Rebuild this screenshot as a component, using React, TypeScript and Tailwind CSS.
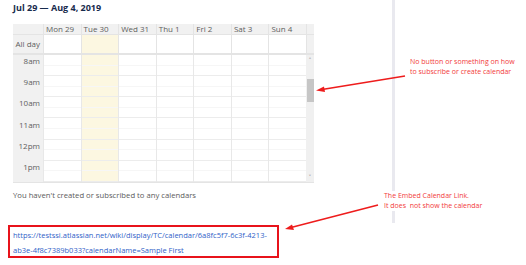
import React from 'react';

const days = ['Mon 29', 'Tue 30', 'Wed 31', 'Thu 1', 'Fri 2', 'Sat 3', 'Sun 4'];
const hours = ['8am', '9am', '10am', '11am', '12pm', '1pm'];

const font = { fontFamily: '"Open Sans", "Noto Sans", sans-serif' };

const Arrows = () => (
  <svg className="absolute inset-0 pointer-events-none" width="526" height="265" viewBox="0 0 526 265">
    <line x1="405" y1="76" x2="322" y2="89.5" stroke="#ee1c1c" strokeWidth="1.6" />
    <polygon points="316,90.5 324,86.5 325,92" fill="#ee1c1c" />
    <line x1="378" y1="205" x2="291" y2="227.5" stroke="#ee1c1c" strokeWidth="1.6" />
    <polygon points="285,229 292,224.5 294,230" fill="#ee1c1c" />
  </svg>
);

const App = () => {
  return (
    <div className="relative w-[526px] h-[265px] bg-white overflow-hidden" style={font}>
      <div className="flex">
        <div className="w-[395px] h-[223px] border-r-[3px] border-[#e9e9ef] pl-[13px] pt-[2px]">
          <h2 className="text-[9px] font-bold text-[#172b4d] leading-[12px] h-[22px]">Jul 29 — Aug 4, 2019</h2>

          <div className="w-[301px] text-[8px] text-[#5e5e5e]">
            {/* header */}
            <div className="flex h-[10px] bg-[#f1f1f1] leading-[10px]">
              <div className="w-[30px]" />
              {days.map(d => (
                <div key={d} className="flex-1 pl-[2px] border-l border-[#e4e4e4] whitespace-nowrap overflow-hidden">{d}</div>
              ))}
              <div className="w-[8px] border-l border-[#e4e4e4]" />
            </div>

            {/* all day */}
            <div className="flex h-[19px] border-t border-[#e4e4e4]">
              <div className="w-[30px] bg-[#f1f1f1] flex items-center justify-end pr-[3px] whitespace-nowrap">All day</div>
              {days.map((d, i) => (
                <div key={d} className={`flex-1 border-l border-[#e4e4e4] ${i === 1 ? 'bg-[#fcf7e1]' : 'bg-white'}`} />
              ))}
              <div className="w-[8px] border-l border-[#e4e4e4] bg-[#f1f1f1]" />
            </div>

            <div className="h-[2px] bg-[#e4e4e4]" />

            {/* time grid */}
            <div className="flex h-[128px] border-b border-[#e4e4e4]">
              <div className="w-[30px] bg-[#f1f1f1] flex flex-col">
                {hours.map(h => (
                  <div key={h} className="h-[21.33px] flex justify-end pr-[3px] pt-[1px] leading-[10px]">{h}</div>
                ))}
              </div>
              {days.map((d, i) => (
                <div key={d} className={`flex-1 flex flex-col border-l border-[#e8e8e8] ${i === 1 ? 'bg-[#fcf7e1]' : 'bg-white'}`}>
                  {Array.from({ length: 12 }).map((_, j) => (
                    <div key={j} className={`h-[10.67px] border-b ${j % 2 === 0 ? 'border-[#f6f6f6]' : 'border-[#ececec]'}`} />
                  ))}
                </div>
              ))}
              <div className="w-[8px] bg-[#f0f0f0] flex flex-col items-center">
                <div className="h-[9px] flex items-end text-[7px] leading-none text-[#505050]">˄</div>
                <div className="h-[15px]" />
                <div className="w-[7px] h-[23px] bg-[#c6c6c6]" />
                <div className="flex-1" />
                <div className="h-[9px] flex items-center text-[7px] leading-none text-[#505050]">˅</div>
              </div>
            </div>
          </div>

          <p className="mt-[6px] text-[7.7px] text-[#5b5b5b] leading-[12px]">You haven't created or subscribed to any calendars</p>
        </div>
      </div>

      <div className="ml-[8px] mt-[2px] w-[271px] h-[33px] border-2 border-[#e8131b] px-[3px] py-[1px] text-[7.5px] leading-[15px] text-[#2f62c8] whitespace-nowrap">
        <div>https://testssi.atlassian.net/wiki/display/TC/calendar/6a8fc5f7-6c3f-4213-</div>
        <div>ab3e-4f8c7389b033?calendarName=Sample First</div>
      </div>

      {/* annotations */}
      <div className="absolute left-[410px] top-[57px] text-[7px] leading-[10px] text-[#f23b3b]">
        <div>No button or something on how</div>
        <div>to subscribe or create calendar</div>
      </div>
      <div className="absolute left-[384px] top-[191px] text-[7px] leading-[10px] text-[#f23b3b] bg-white">
        <div>The Embed Calendar Link.</div>
        <div className="whitespace-pre">It does  not show the calendar</div>
      </div>
      <Arrows />
    </div>
  );
};

export default App;
